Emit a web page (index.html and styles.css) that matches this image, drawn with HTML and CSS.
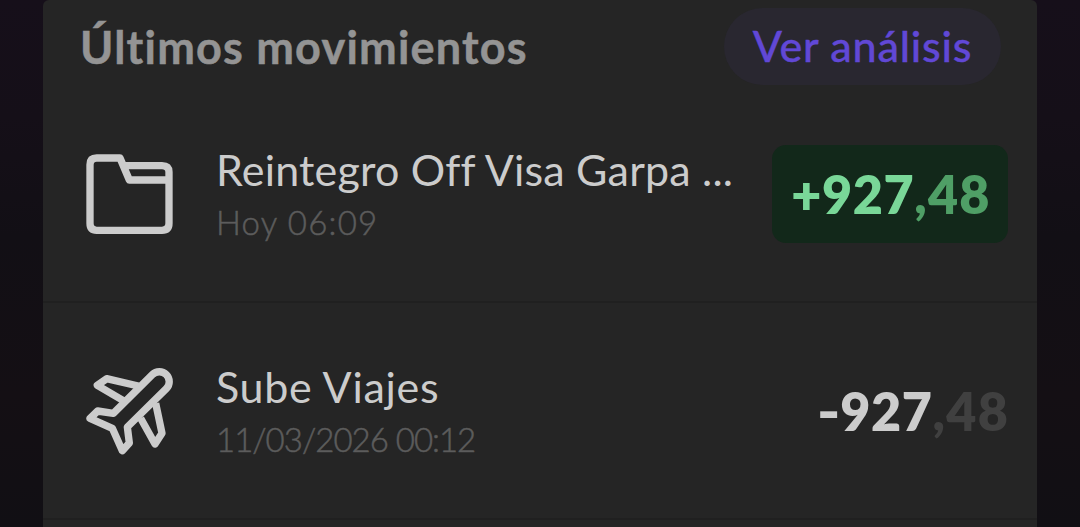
FILE: index.html
```html
<!DOCTYPE html>
<html lang="es">

<head>
    <meta charset="UTF-8" />
    <meta name="viewport" content="width=device-width, initial-scale=1.0" />
    <title>Últimos movimientos</title>
    <link rel="stylesheet" href="styles.css">
</head>

<body>
    <main class="card">
        <header class="card_header">
            <h2>Últimos movimientos</h2>
            <button class="analysis_btn">Ver análisis</button>
        </header>

        <div class="movement">
            <svg class="icon" viewBox="48 30 264 264">
                <path d="M297 120H178L150 54H80Q60 54 60 74V250Q60 271 80 271H276Q297 271 297 250V96Q297 77 276 77H161" />
            </svg>
            <div class="info">
                <h3 class="name name_long">Reintegro Off Visa Garpa ...</h3>
                <p class="date date_short">Hoy 06:09</p>
            </div>
            <div class="amount income">+927<span class="cents">,48</span></div>
        </div>

        <div class="movement">
            <svg class="icon" viewBox="48 51 264 264">
                <path d="M130 190L247 74A29.5 29.5 0 0 1 289 116L172 231L178 279L157 302L127 235L60 205L83 183Z" />
                <path d="M205 108L110 86L82 106L160 152" />
                <path d="M212 205L255 282L276 250L257 160" />
            </svg>
            <div class="info">
                <h3 class="name">Sube Viajes</h3>
                <p class="date">11/03/2026 00:12</p>
            </div>
            <div class="amount expense"><span class="sign">-</span>927<span class="cents">,48</span></div>
        </div>
    </main>
</body>

</html>
```

FILE: styles.css
```css
* {
    box-sizing: border-box;
}

body {
    margin: 0;
    height: 527px;
    overflow: hidden;
    background: linear-gradient(#160f1a 0%, #150f18 22%, #120f15 45%, #140f14 75%, #110f14 100%);
    font-family: Lato, "Open Sans", sans-serif;
    font-variant-ligatures: none;
    color: #cccccc;
}

h2,
h3,
p {
    margin: 0;
}

.card {
    width: 994px;
    height: 527px;
    margin: 0 auto;
    background-color: #252525;
    border-radius: 6px 6px 0 0;
    overflow: hidden;
}

.card_header {
    display: flex;
    justify-content: space-between;
    align-items: center;
    height: 86px;
    padding: 8px 36px 1px 37px;
}

.card_header h2 {
    font-size: 45px;
    line-height: 60px;
    font-weight: 700;
    letter-spacing: 1.2px;
    color: #949494;
    white-space: nowrap;
    -webkit-text-stroke: 0.5px #949494;
}

.analysis_btn {
    width: 277px;
    height: 77px;
    padding: 0 0 2px;
    border: none;
    border-radius: 39px;
    background-color: #292730;
    color: #6148d6;
    font-family: inherit;
    font-size: 43px;
    font-weight: 500;
    letter-spacing: 0.8px;
    cursor: pointer;
    -webkit-text-stroke: 0.4px #6148d6;
}

.movement {
    display: flex;
    align-items: center;
    height: 217px;
    padding: 0 29px 0 43px;
    border-bottom: 2px solid #202020;
}

.icon {
    width: 88px;
    height: 88px;
    flex-shrink: 0;
    fill: none;
    stroke: #cccccc;
    stroke-width: 22;
    stroke-linejoin: round;
}

.info {
    flex: 1;
    padding-left: 42px;
    white-space: nowrap;
}

.name {
    font-size: 43px;
    line-height: 56px;
    font-weight: 400;
    letter-spacing: 0.7px;
}

.name_long {
    letter-spacing: 0.2px;
}

.date {
    font-size: 33px;
    line-height: 48px;
    font-weight: 300;
    letter-spacing: -1px;
    color: #5c5c5c;
    -webkit-text-stroke: 0.5px #5c5c5c;
}

.date_short {
    letter-spacing: 1.2px;
}

.amount {
    font-size: 52px;
    line-height: 98px;
    font-weight: 800;
    letter-spacing: 0.6px;
    white-space: nowrap;
}

.cents {
    color: #404040;
    letter-spacing: 1.2px;
}

.expense .cents {
    margin-right: -1px;
}

.sign {
    display: inline-block;
    margin-right: 1px;
    transform: scaleX(1.2);
}

.income {
    width: 236px;
    padding-left: 2px;
    text-align: center;
    border-radius: 14px;
    background-color: #12281a;
    color: #79d798;
}

.income .cents {
    color: #4f9f66;
}
```
